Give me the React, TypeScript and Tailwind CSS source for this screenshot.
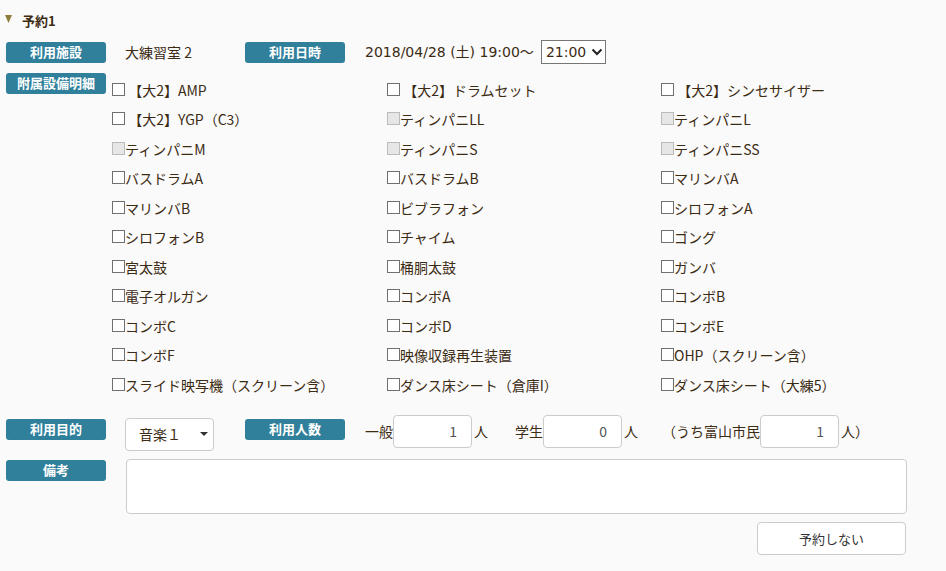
import React from 'react';

type Item = { label: string; disabled?: boolean };

const items: Item[] = [
  { label: ' 【大2】AMP' },
  { label: ' 【大2】ドラムセット' },
  { label: ' 【大2】シンセサイザー' },
  { label: ' 【大2】YGP（C3）' },
  { label: 'ティンパニLL', disabled: true },
  { label: 'ティンパニL', disabled: true },
  { label: 'ティンパニM', disabled: true },
  { label: 'ティンパニS', disabled: true },
  { label: 'ティンパニSS', disabled: true },
  { label: 'バスドラムA' },
  { label: 'バスドラムB' },
  { label: 'マリンバA' },
  { label: 'マリンバB' },
  { label: 'ビブラフォン' },
  { label: 'シロフォンA' },
  { label: 'シロフォンB' },
  { label: 'チャイム' },
  { label: 'ゴング' },
  { label: '宮太鼓' },
  { label: '桶胴太鼓' },
  { label: 'ガンバ' },
  { label: '電子オルガン' },
  { label: 'コンボA' },
  { label: 'コンボB' },
  { label: 'コンボC' },
  { label: 'コンボD' },
  { label: 'コンボE' },
  { label: 'コンボF' },
  { label: '映像収録再生装置' },
  { label: 'OHP（スクリーン含）' },
  { label: 'スライド映写機（スクリーン含）' },
  { label: 'ダンス床シート（倉庫I）' },
  { label: 'ダンス床シート（大練5）' },
];

function Label({ children }: { children: React.ReactNode }) {
  return (
    <div className="flex h-[21px] w-[100px] shrink-0 items-center justify-center rounded-[3px] bg-[#30809b] pb-[2px] text-[13px] font-bold leading-none text-white">
      {children}
    </div>
  );
}

function NumInput({ value }: { value: string }) {
  return (
    <div className="flex h-[33px] w-[79px] items-center justify-end rounded-[4px] border border-[#cccccc] bg-white pr-[14px] text-[14px] text-[#555555]">
      {value}
    </div>
  );
}

export default function App() {
  return (
    <div
      className="h-[571px] w-[946px] overflow-hidden bg-[#fafafa] text-[14px] text-[#3c2b13]"
      style={{ fontFamily: '"Noto Sans CJK JP", "Noto Sans", sans-serif' }}
    >
      <div className="flex h-[29px] items-end pl-[5px]">
        <svg width="7" height="8" viewBox="0 0 7 8" className="mb-[6px]">
          <polygon points="0,0 7,0 3.5,8" fill="#8d7d3f" />
        </svg>
        <span className="ml-[10px] text-[13px] font-bold leading-[16px]">予約1</span>
      </div>

      <div className="mt-[11px] flex h-[24px] items-center pl-[6px]">
        <Label>利用施設</Label>
        <span className="ml-[19px] w-[120px] leading-none">大練習室 2</span>
        <Label>利用日時</Label>
        <span
          className="ml-[20px] leading-none"
          style={{ fontFamily: '"DejaVu Sans", "Noto Sans CJK JP", sans-serif' }}
        >
          2018/04/28 (土) 19:00～
        </span>
        <div
          className="ml-[7px] flex h-[24px] w-[65px] items-center border border-[#767676] bg-white pl-[4px] text-[14px] leading-none"
          style={{ fontFamily: '"DejaVu Sans", sans-serif' }}
        >
          21:00
          <svg width="12" height="8" viewBox="0 0 12 8" className="ml-[5px]">
            <path d="M1.5 1.5 L6 6 L10.5 1.5" stroke="#222" strokeWidth="2" fill="none" />
          </svg>
        </div>
      </div>

      <div className="mt-[9px] flex pl-[6px]">
        <div>
          <Label>附属設備明細</Label>
        </div>
        <div className="ml-[6px] mt-[2px] grid grid-cols-[275px_274px_280px]">
          {items.map((it, i) => (
            <div key={i} className="flex h-[29.5px] items-center whitespace-pre leading-none">
              <span
                className={
                  it.disabled
                    ? 'mt-[-1px] h-[13px] w-[13px] shrink-0 border border-[#bbbbbb] bg-[#e6e6e6]'
                    : 'mt-[-1px] h-[13px] w-[13px] shrink-0 border border-[#707070] bg-white'
                }
              />
              <span>{it.label}</span>
            </div>
          ))}
        </div>
      </div>

      <div className="mt-[15px] flex items-start pl-[6px]">
        <div className="pt-[4px]">
          <Label>利用目的</Label>
        </div>
        <div className="ml-[19px] mt-[3px] flex h-[33px] w-[89px] items-center rounded-[4px] border border-[#cccccc] bg-white pl-[13px] leading-none">
          音楽１
          <svg width="8" height="4" viewBox="0 0 8 4" className="ml-[19px]">
            <polygon points="0,0 8,0 4,4" fill="#333" />
          </svg>
        </div>
        <div className="ml-[31px] pt-[4px]">
          <Label>利用人数</Label>
        </div>
        <div className="ml-[20px] flex items-center">
          <span className="leading-none">一般</span>
          <NumInput value="1" />
          <span className="ml-[2px] leading-none">人</span>
          <span className="ml-[27px] leading-none">学生</span>
          <NumInput value="0" />
          <span className="ml-[2px] leading-none">人</span>
          <span className="ml-[24px] leading-none">（うち富山市民</span>
          <NumInput value="1" />
          <span className="ml-[2px] leading-none">人）</span>
        </div>
      </div>

      <div className="mt-[8px] flex items-start pl-[6px]">
        <div className="pt-[1px]">
          <Label>備考</Label>
        </div>
        <div className="ml-[20px] h-[55px] w-[781px] rounded-[4px] border border-[#cccccc] bg-white" />
      </div>

      <div className="mt-[8px] flex pl-[757px]">
        <div className="flex h-[33px] w-[149px] items-center justify-center rounded-[4px] border border-[#cccccc] bg-white text-[13px] leading-none text-[#333333]">
          予約しない
        </div>
      </div>
    </div>
  );
}
